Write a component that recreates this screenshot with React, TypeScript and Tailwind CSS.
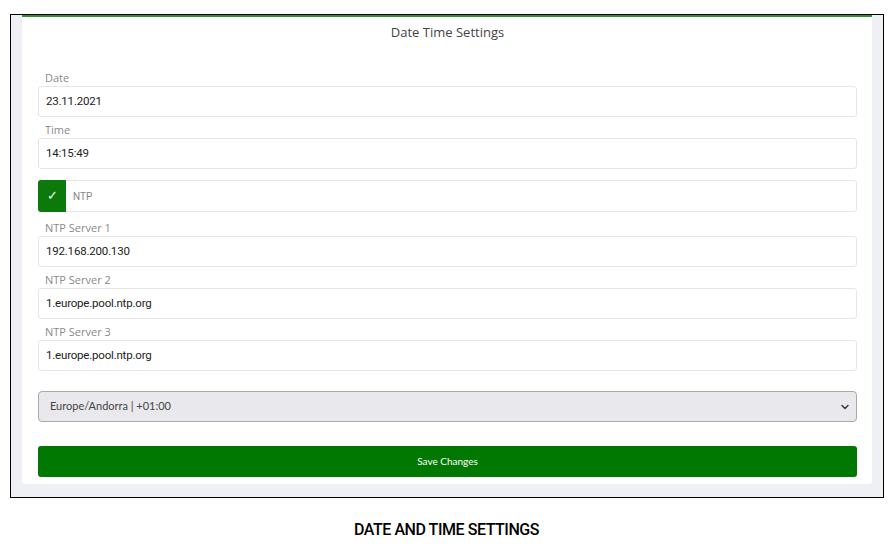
const fields = [
  { label: "NTP Server 1", value: "192.168.200.130" },
  { label: "NTP Server 2", value: "1.europe.pool.ntp.org" },
  { label: "NTP Server 3", value: "1.europe.pool.ntp.org" },
];

function Field({ label, value }: { label: string; value: string }) {
  return (
    <div className="flex flex-col">
      <div className="flex h-[21px] items-end pb-[1px] pl-[7px] font-['Open_Sans',sans-serif] text-[11px] leading-[15px] text-[#8a8a8a]">
        {label}
      </div>
      <div className="flex h-[31px] items-center rounded-[3px] border border-[#e6e6e6] bg-white pl-[7px] font-['Roboto',sans-serif] text-[11.5px] tracking-[-0.2px] text-[#222]">
        {value}
      </div>
    </div>
  );
}

export default function App() {
  return (
    <div className="h-[556px] w-[893px] bg-white">
      <div className="pl-[10px] pt-[14px]">
        {/* screenshot frame */}
        <div className="flex h-[484px] w-[874px] flex-col border border-black bg-[#eef0f3] pl-[11px] pr-[10px]">
          <div className="flex h-[469px] w-[850px] flex-col rounded-b-[3px] border-t-2 border-[#2f8f2f] bg-white px-[16px] pr-[15px]">
            <div className="flex h-[32px] items-center justify-center font-['Open_Sans',sans-serif] text-[13px] text-[#444]">
              Date Time Settings
            </div>
            <div className="h-[16px]" />
            <Field label="Date" value="23.11.2021" />
            <Field label="Time" value="14:15:49" />

            {/* NTP checkbox */}
            <div className="mt-[11px] flex h-[32px] items-stretch rounded-[3px] border border-[#e6e6e6] bg-white">
              <div className="-m-px flex w-[28px] items-center justify-center rounded-l-[3px] bg-[#0b7a0b] text-[13px] text-white">
                ✓
              </div>
              <div className="flex items-center pl-[8px] font-['Roboto',sans-serif] text-[10px] text-[#888]">
                NTP
              </div>
            </div>

            <div className="h-[3px]" />
            {fields.map((f, i) => (
              <Field key={i} label={f.label} value={f.value} />
            ))}

            {/* timezone select */}
            <div className="mt-[20px] flex h-[31px] items-center justify-between rounded-[4px] border border-[#a9a9a9] bg-[#e9e9ed] pl-[11px] pr-[6px] font-['Lato',sans-serif] text-[11px] text-[#444]">
              <span>Europe/Andorra | +01:00</span>
              <svg width="10" height="10" viewBox="0 0 10 10" fill="none">
                <path d="M2 3.5 L5 6.5 L8 3.5" stroke="#333" strokeWidth="1.4" strokeLinecap="round" strokeLinejoin="round" />
              </svg>
            </div>

            <button className="mt-[24px] flex h-[31px] items-center justify-center rounded-[3px] bg-[#017801] font-['Lato',sans-serif] text-[10px] text-white">
              Save Changes
            </button>
          </div>
        </div>
      </div>

      <div className="mt-[22px] text-center font-['Roboto',sans-serif] text-[16px] font-medium leading-[20px] tracking-[-0.45px] text-black">
        DATE AND TIME SETTINGS
      </div>
    </div>
  );
}
